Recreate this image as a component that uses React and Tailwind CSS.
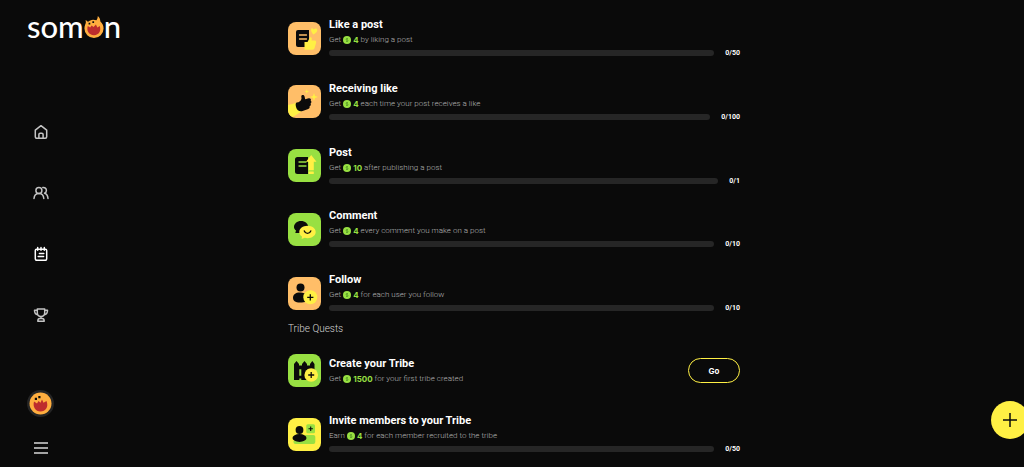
import React from "react";

const ORANGE = "#ffbe68";
const LIME = "#98e042";
const YELLOW = "#fff044";
const INK = "#0b0b0b";

function Tile({ color, children }) {
  return (
    <svg viewBox="0 0 33 33" className="size-[33px] shrink-0" aria-hidden="true">
      <rect width="33" height="33" rx="8" fill={color} />
      {children}
    </svg>
  );
}

const LikePostIcon = () => (
  <Tile color={ORANGE}>
    <path d="M10 8h11v12l-3 5H10a2 2 0 0 1-2-2V10a2 2 0 0 1 2-2Z" fill={INK} />
    <path d="M11.500 13h7M11.500 17h7" stroke={ORANGE} strokeWidth="1.300" strokeLinecap="round" />
    <path d="M16.500 20h3l2.400-4.600c2-.4 2.200 1 1.600 3.100h3.200c1.600 0 1.700 1.600 1.200 3l-1.300 4.600c-.4 1.200-1 1.600-2.200 1.600h-7.900Z" fill={YELLOW} />
    <path d="M24 6.200c1 .1 1.500.8 1.800 1.400.7-.9 1.700-1.500 2.800-.9 1.200 1 .7 2.700-.5 3.800-.9.9-1.900 1.500-2.900 2-.8-1.200-1.900-2.500-2.100-4-.1-1.200 0-2.100.9-2.300Z" fill={YELLOW} />
  </Tile>
);

const ReceiveLikeIcon = () => (
  <Tile color={ORANGE}>
    <path d="M0 20c3-.4 6-1.700 9-2.500l4 9.500C10 28.500 7 31 4.500 32A8 8 0 0 1 0 25Z" fill={YELLOW} />
    <path d="M8.500 17.500c3-.2 4.500-1.500 5-4l-.2-2.200c.2-1.800 2.700-1.800 3.200 0l.7 2.900 3.600-.9c1.800-.2 2.600 1.200 1.900 2.400 1 .7 1 2-.1 2.700.6 1.200.2 2.300-1 2.800.4 1.500-.4 2.500-2 3l-5 1.700c-3 .8-5.800-.5-6.400-3.400-.4-1.800-1.100-3.700.3-5Z" fill={INK} />
    <path d="m18.800 4 .6 1.900 1.900.6-1.900.6-.6 1.900-.6-1.900-1.900-.6 1.900-.6ZM26 8l1 3 3 1-3 1-1 3-1-3-3-1 3-1Z" fill={YELLOW} />
  </Tile>
);

const PostIcon = () => (
  <Tile color={LIME}>
    <path d="M9.500 8H20v17H9.500A2.500 2.500 0 0 1 7 22.500v-12A2.500 2.500 0 0 1 9.500 8Z" fill={INK} />
    <path d="M11 13h7M11 17h7" stroke={LIME} strokeWidth="1.300" strokeLinecap="round" />
    <path d="m23.200 6 5.300 6.800h-2.700v8.400h-5.200v-8.400H18Z" fill={YELLOW} />
    <rect x="20.600" y="22.500" width="5.200" height="2.500" rx=".5" fill={YELLOW} />
  </Tile>
);

const CommentIcon = () => (
  <Tile color={LIME}>
    <path d="M13 8c4 0 7.300 2.700 7.300 6S17 20 13 20H7.300l.7-2.600C6.600 16.500 6 15.300 6 14c0-3.300 3-6 7-6Z" fill={INK} />
    <path d="M19.500 12.800c4.600 0 8.200 2.800 8.200 6.200s-3.600 6.200-8.200 6.200c-1 0-1.800-.1-2.700-.4L13.600 26l.4-2.400c-1.700-1.200-2.700-2.800-2.700-4.600 0-3.400 3.600-6.200 8.200-6.200Z" fill={YELLOW} />
    <path d="M16.300 17.900c1.200 3.200 5.200 3.200 6.500 0" fill="none" stroke={INK} strokeWidth="1.300" strokeLinecap="round" />
  </Tile>
);

const FollowIcon = () => (
  <Tile color={ORANGE}>
    <circle cx="12.500" cy="10.500" r="4" fill={INK} />
    <path d="M5 20.500c0-3 3-5 6.500-5s9.500 2 9.500 5.500-4 4.500-9 4.500-7-1.800-7-5Z" fill={INK} />
    <circle cx="22.300" cy="20.300" r="7" fill={YELLOW} />
    <path d="M22.300 17.200v6.200M19.200 20.300h6.200" stroke={INK} strokeWidth="1.300" />
  </Tile>
);

const CreateTribeIcon = () => (
  <Tile color={LIME}>
    <path d="M6 10 8.500 7 11 10v1.500h3V10l2.500-3 2.500 3v1.500h3V10l2.300-3L26.500 10v16H6Z" fill={INK} />
    <path d="M11.300 15.300h2v6.500h-2ZM19.300 15.300h2v4h-2ZM11.300 24.500h2V26h-2Z" fill={LIME} />
    <circle cx="23.200" cy="21" r="6.800" fill={YELLOW} />
    <path d="M23.200 18v6M20.200 21h6" stroke={INK} strokeWidth="1.300" />
  </Tile>
);

const InviteIcon = () => (
  <Tile color={YELLOW}>
    <path d="M5.500 23H17v-6h8.500a1.800 1.800 0 0 1 1.800 1.800V24a2 2 0 0 1-2 2H7.500a2 2 0 0 1-2-2Z" fill={LIME} />
    <rect x="18.300" y="6.300" width="8.700" height="9" rx="1.500" fill={LIME} />
    <path d="M22.700 8.500v4.400M20.500 10.700h4.400" stroke={INK} strokeWidth="1.100" />
    <circle cx="11.500" cy="12" r="3.900" fill={INK} />
    <ellipse cx="11.500" cy="20" rx="7" ry="3.900" fill={INK} />
  </Tile>
);

function Coin() {
  return (
    <svg viewBox="0 0 8 8" className="size-2 shrink-0" aria-hidden="true">
      <circle cx="4" cy="4" r="4" fill={LIME} />
      <path d="M5 2.600H3.600c-.8 0-.8 1.400 0 1.400h.9c.9 0 .9 1.500 0 1.500H3M4 2v4" fill="none" stroke="#4c8f22" strokeWidth=".6" />
    </svg>
  );
}

const quests = [
  { icon: LikePostIcon, title: "Like a post", verb: "Get", amount: 4, text: "by liking a post", goal: 50 },
  { icon: ReceiveLikeIcon, title: "Receiving like", verb: "Get", amount: 4, text: "each time your post receives a like", goal: 100 },
  { icon: PostIcon, title: "Post", verb: "Get", amount: 10, text: "after publishing a post", goal: 1 },
  { icon: CommentIcon, title: "Comment", verb: "Get", amount: 4, text: "every comment you make on a post", goal: 10 },
  { icon: FollowIcon, title: "Follow", verb: "Get", amount: 4, text: "for each user you follow", goal: 10 },
];

const tribeQuests = [
  { icon: CreateTribeIcon, title: "Create your Tribe", verb: "Get", amount: 1500, text: "for your first tribe created" },
  { icon: InviteIcon, title: "Invite members to your Tribe", verb: "Earn", amount: 4, text: "for each member recruited to the tribe", goal: 50 },
];

function Quest({ icon: Icon, title, verb, amount, text, goal }) {
  return (
    <li className="flex items-center gap-2">
      <Icon />
      <div className="min-w-0 flex-1">
        <h3 className="text-[11px] leading-4 font-bold text-white">{title}</h3>
        <p className="flex items-center gap-[2px] text-[8px] leading-[14px] font-light text-[#b4b4b4]">
          <span>{verb}</span>
          <Coin />
          <span className="font-[Inter,sans-serif] font-bold text-[#98e042]">{amount}</span>
          <span>{text}</span>
        </p>
        {goal && (
          <div className="flex h-3 items-center gap-[11px]">
            <div
              role="progressbar"
              aria-label={title}
              aria-valuenow={0}
              aria-valuemax={goal}
              className="h-1.5 flex-1 rounded-full bg-[#262626]"
            />
            <span className="text-[7px] leading-3 font-bold text-white">0/{goal}</span>
          </div>
        )}
      </div>
      {!goal && (
        <button type="button" className="h-[25px] w-[52px] rounded-full border border-[#fff044] font-[Inter,sans-serif] text-[8px] font-bold text-white">
          Go
        </button>
      )}
    </li>
  );
}

function Flame({ className }) {
  return (
    <svg viewBox="0 0 20 23" className={className} aria-hidden="true">
      <path d="M1 4.500c1.300.2 2 .9 2.600 1.800C5.300 5 7 4.300 9 4c1.500.1 2.500.2 3.500.4C13.400 3.500 13.900 2 14 0c2 1.800 2.500 3.500 2.700 5.800C18.700 7.600 20 10 20 13a10 10 0 0 1-20 0c0-3 1.400-5 1.500-6.500C1.500 5.500 1.300 5 1 4.500Z" fill="#ffae3f" />
      <path d="M3.500 10.500 6 12 7.500 10l2 1.500L12 9l1.500 3L16 10.500c1.700 5-.5 9.500-6 9.500s-8-4.500-6.500-9.500Z" fill="#bd2d2d" />
      <path d="M4.300 7h1.800v1.800H4.300ZM8.300 5.500h1.800v1.800H8.300Z" fill={INK} />
    </svg>
  );
}

const iconProps = {
  viewBox: "0 0 16 16",
  className: "size-4",
  fill: "none",
  stroke: "currentColor",
  strokeWidth: 1.5,
  strokeLinecap: "round",
  strokeLinejoin: "round",
  "aria-hidden": true,
};

const nav = [
  {
    label: "Home",
    color: "text-[#c4c4c4]",
    icon: (
      <svg {...iconProps}>
        <path d="M2.300 6.200 8 1.700l5.700 4.500v6.600a1.500 1.500 0 0 1-1.500 1.500H3.800a1.500 1.500 0 0 1-1.500-1.500Z" />
        <path d="M5.900 14.300v-3.700a1.300 1.300 0 0 1 1.300-1.300h1.600a1.300 1.300 0 0 1 1.300 1.300v3.700" />
      </svg>
    ),
  },
  {
    label: "Friends",
    color: "text-[#c4c4c4]",
    icon: (
      <svg {...iconProps}>
        <circle cx="5.900" cy="5.400" r="3" />
        <path d="M1 13.500c.2-3 2-5 4.900-5s4.700 2 4.900 5M9.800 2.500c2.200-.3 3.600 1 3.600 2.900 0 1.400-.7 2.300-1.900 2.800 2.200.6 3.300 2.300 3.500 5.300" />
      </svg>
    ),
  },
  {
    label: "Quests",
    color: "text-white",
    icon: (
      <svg {...iconProps}>
        <path d="M3.500 3.300h9a1.200 1.200 0 0 1 1.200 1.200v8.300a1.500 1.500 0 0 1-1.500 1.500H3.800a1.500 1.500 0 0 1-1.500-1.500V4.500a1.200 1.200 0 0 1 1.200-1.200ZM4.700 1.500v2.700M8 1.500v2.700M11.300 1.500v2.700M6.400 7.500h4.400M5.200 10.500h5.400" />
      </svg>
    ),
  },
  {
    label: "Ranking",
    color: "text-[#c4c4c4]",
    icon: (
      <svg {...iconProps}>
        <path d="M4.300 2h7.400v3.500c0 2.500-1.500 4-3.700 4s-3.700-1.500-3.700-4ZM4.300 3.300H1.500c0 2.700 1 4.200 3.300 4.400M11.700 3.300h2.800c0 2.700-1 4.200-3.300 4.400M8 9.500v2M4.800 14.300c0-1.800 1-2.700 2-2.700h2.400c1 0 2 .9 2 2.700Z" />
      </svg>
    ),
  },
];

function Sidebar() {
  return (
    <aside className="flex flex-col pl-[27px]">
      <a href="#home" aria-label="somon" className="flex h-[46px] items-start pt-[5px] font-[Lato,sans-serif] text-[31px] leading-[42px] font-medium text-white">
        <span>som</span>
        <Flame className="mt-[11px] h-[22px] w-5" />
        <span>n</span>
      </a>
      <nav className="mt-[78px] flex w-[27px] flex-col items-center gap-[45px]">
        {nav.map((item) => (
          <a key={item.label} href={`#${item.label.toLowerCase()}`} aria-label={item.label} className={item.color}>
            {item.icon}
          </a>
        ))}
      </nav>
      <div className="mt-[67px] flex w-[27px] flex-col items-center gap-[23px]">
        <a href="#profile" aria-label="Profile">
          <svg viewBox="0 0 27 27" className="size-[27px]" aria-hidden="true">
            <circle cx="13.500" cy="13.500" r="13.500" fill="#252525" />
            <circle cx="13.500" cy="13.500" r="11" fill="#ffae3f" />
            <path d="m7 11.500 3 2 1.500-2.500 2 1.800 1.500-3.300 1.500 3.300 3-1.800C22 17 18.500 21.500 13.500 21.500S5.500 17 7 11.500Z" fill="#bd2d2d" />
            <path d="M7.800 7.700h2.200v2.200H7.800ZM11.300 6h2.200v2.200h-2.200Z" fill={INK} />
          </svg>
        </a>
        <button type="button" aria-label="Menu" className="text-[#d8d8d8]">
          <svg viewBox="0 0 16 16" className="size-4" aria-hidden="true">
            <path d="M1 3h14M1 8h14M1 13h14" stroke="currentColor" strokeWidth="1.500" />
          </svg>
        </button>
      </div>
    </aside>
  );
}

export default function App() {
  return (
    <div className="grid min-h-screen grid-cols-[288px_minmax(0,452px)_1fr] overflow-hidden bg-[#0a0a0a] font-[Roboto,sans-serif]">
      <Sidebar />
      <main className="pt-[17px]">
        <ul className="flex min-h-[297px] flex-col justify-between">
          {quests.map((quest) => (
            <Quest key={quest.title} {...quest} />
          ))}
        </ul>
        <h2 className="mt-2 text-[10px] leading-[14px] font-light text-[#d4d4d4]">Tribe Quests</h2>
        <ul className="mt-[18px] flex flex-col gap-[26px]">
          {tribeQuests.map((quest) => (
            <Quest key={quest.title} {...quest} />
          ))}
        </ul>
      </main>
      <button type="button" aria-label="New post" className="fixed -right-[5px] bottom-7 flex size-[38px] items-center justify-center rounded-full bg-[#fff044]">
        <svg viewBox="0 0 14 14" className="size-3.5" aria-hidden="true">
          <path d="M7 0v14M0 7h14" stroke={INK} strokeWidth="1.500" />
        </svg>
      </button>
    </div>
  );
}
